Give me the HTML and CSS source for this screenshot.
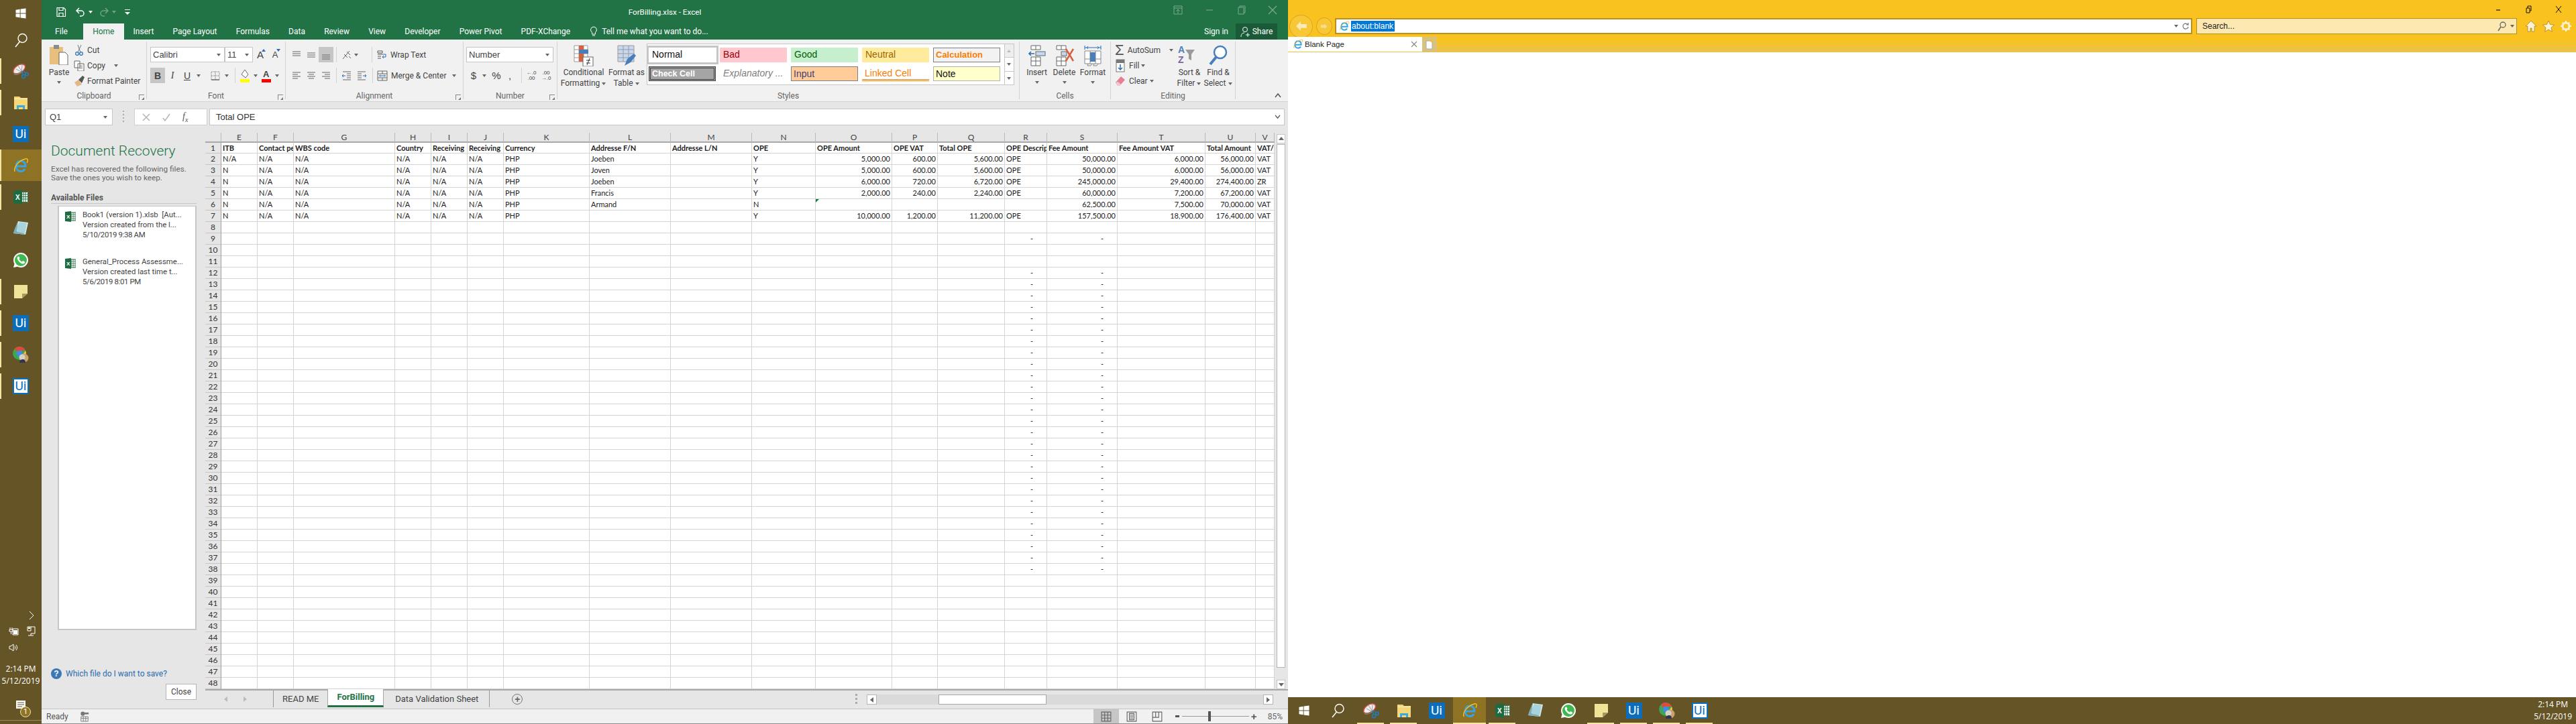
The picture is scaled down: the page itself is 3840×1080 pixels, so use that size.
FILE: index.html
```html
<!DOCTYPE html>
<html lang="en">
<head>
<meta charset="utf-8">
<title>ForBilling.xlsx - Excel</title>
<link rel="stylesheet" href="styles.css">
</head>
<body>
<svg class="defs" width="0" height="0" aria-hidden="true">
  <symbol id="i-win" viewBox="0 0 24 24"><path d="M3 5.6 10.4 4.5V11.5H3ZM11.5 4.3 21 3V11.5H11.5ZM3 12.5H10.4V19.5L3 18.4ZM11.5 12.5H21V21L11.5 19.7Z" fill="#fff"/></symbol>
  <symbol id="i-search" viewBox="0 0 24 24"><circle cx="14.5" cy="9" r="6.5" fill="none" stroke="#fff" stroke-width="1.4"/><path d="M10.5 14 4 22" stroke="#fff" stroke-width="1.6"/></symbol>
  <symbol id="i-snip" viewBox="0 0 24 24"><path d="M1 14C0 8 8 1 15 2c5 1 4 5 1 9-4 4-10 7-13 6z" fill="#eee" stroke="#d8504c" stroke-width="1.4"/><path d="M1 14c3 2 8 1 11-1l1 2c-3 2-6 3-10 3z" fill="#94745f"/><path d="M8 4l7 11M14 3 13 15M5 9l9 5" stroke="#8a8a8a" stroke-width=".8"/><circle cx="16" cy="20" r="2.6" fill="none" stroke="#1c7fc4" stroke-width="1.5"/><circle cx="21" cy="16.5" r="2.2" fill="none" stroke="#1c7fc4" stroke-width="1.5"/><path d="M13 12l3 6M15 12l5 3" stroke="#1c7fc4" stroke-width="1.2"/></symbol>
  <symbol id="i-folder" viewBox="0 0 24 24"><path d="M2 3h8l2 2h10v17H2z" fill="#f5d778"/><path d="M2 6h20v1H2z" fill="#fff3c4"/><path d="M6 22v-6h12v6h-3v-3H9v3z" fill="#38a9e2"/></symbol>
  <symbol id="i-ie" viewBox="0 0 24 24"><path d="M6 13h13c0-5-3-8-7-8s-7 3.500-7 8 3 7.500 7 7.500c3 0 5-1 6-3.500" fill="none" stroke="#35a4e8" stroke-width="3"/><path d="M3 21C1 15 8 5 19 2c4-1 4 2 2 6" fill="none" stroke="#f3c11c" stroke-width="1.400"/></symbol>
  <symbol id="i-xl" viewBox="0 0 24 24"><rect x="12" y="4" width="11" height="16" fill="#fff"/><path d="M12.500 4.500h10v15h-10M16 4.500v15M19 4.500v15M13 8h10M13 11.500h10M13 15h10" fill="none" stroke="#1e6b41" stroke-width=".9"/><path d="M1 3 14 1V23L1 21Z" fill="#1e6b41"/><text x="4" y="15.500" class="svg-x">X</text></symbol>
  <symbol id="i-note" viewBox="0 0 24 24"><path d="M8 1 23 3 19 21 1 19Z" fill="#d8eaee"/><path d="M8 1 3 12 1 19 19 21 14 17 6 16Z" fill="#7fb0ba"/><path d="M7 9 10 2 21 4 18 19 7 17Z" fill="#a9d3dc"/></symbol>
  <symbol id="i-wa" viewBox="0 0 24 24"><path d="M12 1a11 11 0 0 1 0 22c-2 0-4-.500-5-1.200L1 23l1.500-5.500A11 11 0 0 1 12 1z" fill="#fff"/><circle cx="12" cy="12" r="9" fill="#3fb94f"/><path d="M8 6.500c-1.500 1-2 3 0 6s5 5.500 8 5c2-.500 2.500-2 2-3l-3-1.500-1.200 1.500c-2-.800-3.300-2.200-4.300-4l1-1.500L9.200 6.500z" fill="#fff"/></symbol>
  <symbol id="i-sticky" viewBox="0 0 24 24"><path d="M2 2H22V15L14 22H2Z" fill="#f0e398"/><path d="M14 22V15H22Z" fill="#a39a62"/></symbol>
  <symbol id="i-chrome" viewBox="0 0 24 24"><circle cx="10" cy="10" r="10" fill="#3aa757"/><path d="M10 0a10 10 0 0 1 9 6H10a4 4 0 0 0-4 2L3 3a10 10 0 0 1 7-3z" fill="#de4b3e"/><path d="M19 6a10 10 0 0 1-8 14l4-8z" fill="#f7c531"/><circle cx="10" cy="10" r="4" fill="#4688f1"/><circle cx="17" cy="17" r="6.500" fill="#c9a26c"/><circle cx="14" cy="16" r="4.500" fill="#d7d2c8"/><path d="M10 24c0-4 3-5 5-5s4 1 4 5z" fill="#2f3550"/></symbol>
  <symbol id="i-xlsm" viewBox="0 0 16 16"><rect x="8" y="2" width="8" height="12" fill="#fff" stroke="#1e6b41"/><path d="M10 2v12M13 2v12M8 5h8M8 8h8M8 11h8" stroke="#1e6b41" stroke-width=".7"/><path d="M0 1 9 0V16L0 15Z" fill="#1e6b41"/><text x="2" y="11" class="svg-x small">X</text></symbol>
  <symbol id="l-top" viewBox="0 0 16 16"><path d="M2 3h12M2 6h12M2 9h12" stroke="#666" fill="none"/></symbol>
  <symbol id="l-mid" viewBox="0 0 16 16"><path d="M2 5h12M2 8h12M2 11h12" stroke="#666" fill="none"/></symbol>
  <symbol id="l-bot" viewBox="0 0 16 16"><path d="M2 8h12M2 11h12M2 14h12" stroke="#666" fill="none"/></symbol>
  <symbol id="l-left" viewBox="0 0 16 16"><path d="M2 3h12M2 6h8M2 9h12M2 12h8" stroke="#666" fill="none"/></symbol>
  <symbol id="l-center" viewBox="0 0 16 16"><path d="M2 3h12M4 6h8M2 9h12M4 12h8" stroke="#666" fill="none"/></symbol>
  <symbol id="l-right" viewBox="0 0 16 16"><path d="M2 3h12M6 6h8M2 9h12M6 12h8" stroke="#666" fill="none"/></symbol>
</svg>

<div class="desk">
  <aside class="vbar">
    <div class="vstart"><svg class="i20"><use href="#i-win"/></svg></div>
    <div class="vstart"><svg class="i24"><use href="#i-search"/></svg></div>
    <div class="vitems">
      <div class="vitem on"><svg class="i24"><use href="#i-snip"/></svg></div>
      <div class="vitem on"><svg class="i24"><use href="#i-folder"/></svg></div>
      <div class="vitem"><span class="ui">Ui</span></div>
      <div class="vitem on active"><svg class="i24"><use href="#i-ie"/></svg></div>
      <div class="vitem on"><svg class="i24"><use href="#i-xl"/></svg></div>
      <div class="vitem"><svg class="i24"><use href="#i-note"/></svg></div>
      <div class="vitem"><svg class="i24"><use href="#i-wa"/></svg></div>
      <div class="vitem on"><svg class="i24"><use href="#i-sticky"/></svg></div>
      <div class="vitem on"><span class="ui">Ui</span></div>
      <div class="vitem on"><svg class="i24"><use href="#i-chrome"/></svg></div>
      <div class="vitem on"><span class="ui alt">Ui</span></div>
    </div>
    <div class="vtray">
      <div class="tray-row end"><svg class="tray" viewBox="0 0 16 16"><path d="M6 2l6 6-6 6" fill="none" stroke="#fff"/></svg></div>
      <div class="tray-row">
        <svg class="tray" viewBox="0 0 16 16"><path d="M3 2v3M6 2v3M2 5h5v3H2zM4.500 8v4M7 4h8v9H7z" fill="none" stroke="#fff"/><rect x="8" y="6" width="6" height="6" fill="#fff"/></svg>
        <svg class="tray" viewBox="0 0 16 16"><path d="M3 1h11v10H8M3 1v6h5V1M8 11v3M4 14h8" fill="none" stroke="#fff"/><rect x="4" y="2" width="3" height="2" fill="#fff"/></svg>
      </div>
      <div class="tray-row"><svg class="tray" viewBox="0 0 16 16"><path d="M2 6h2l4-3v10l-4-3H2zM10 5.500c1 1.500 1 3.500 0 5M12 4c2 2.500 2 5.500 0 8" fill="none" stroke="#fff"/></svg></div>
      <div class="vclock"><span>2:14 PM</span><span>5/12/2019</span></div>
      <div class="vnotify">
        <svg class="tray" viewBox="0 0 16 16"><path d="M1 0h14v12H1z" fill="#fff"/><path d="M3 3h10M3 6h10M3 9h7" stroke="#655426"/></svg>
        <span class="badge">1</span>
      </div>
    </div>
  </aside>

  <main class="excel">
    <header class="xl-title">
      <div class="qat">
        <span class="b"><svg class="i16" viewBox="0 0 16 16"><path d="M2 1.500h10l2.500 2.500v10.500h-12.500zM5 1.500v4h6v-4M5 14.500v-5h6v5" fill="none" stroke="#fff" stroke-width="1.200"/></svg></span>
        <span class="b gap7"><svg class="i16" viewBox="0 0 16 16"><path d="M6 2 2 6l4 4M2 6h7a4 4 0 0 1 0 8H7" fill="none" stroke="#fff" stroke-width="1.500"/></svg></span><span class="ar white"></span>
        <span class="b gap5"><svg class="i16" viewBox="0 0 16 16"><path d="M10 2l4 4-4 4M14 6H7a4 4 0 0 0 0 8h2" fill="none" stroke="#6fa287" stroke-width="1.500"/></svg></span><span class="ar dim"></span>
        <span class="qat-more"></span>
      </div>
      <div class="xl-name">ForBilling.xlsx - Excel</div>
      <div class="winbtns">
        <svg class="i16" viewBox="0 0 16 16"><path d="M2 2h12v12H2zM2 5h12M8 13V7M5.500 9.500 8 7l2.500 2.500" fill="none" stroke="#7fa893"/></svg>
        <svg class="i16" viewBox="0 0 16 16"><path d="M3 8h10" stroke="#7fa893"/></svg>
        <svg class="i16" viewBox="0 0 16 16"><path d="M4 4h8v10H4zM6 4V2h8v10h-2" fill="none" stroke="#7fa893"/></svg>
        <svg class="i16" viewBox="0 0 16 16"><path d="M2 2l12 12M14 2 2 14" stroke="#7fa893" stroke-width="1.200"/></svg>
      </div>
    </header>

    <nav class="xl-tabs">
      <span class="tab file">File</span>
      <span class="tab cur">Home</span>
      <span class="tab">Insert</span>
      <span class="tab">Page Layout</span>
      <span class="tab">Formulas</span>
      <span class="tab">Data</span>
      <span class="tab">Review</span>
      <span class="tab">View</span>
      <span class="tab">Developer</span>
      <span class="tab">Power Pivot</span>
      <span class="tab">PDF-XChange</span>
      <span class="tell"><svg class="i16" viewBox="0 0 16 16"><path d="M8 1a4.500 4.500 0 0 0-2.500 8.200V12h5V9.200A4.500 4.500 0 0 0 8 1zM6 14h4" fill="none" stroke="#fff"/></svg>Tell me what you want to do...</span>
      <span class="signin">Sign in</span>
      <span class="share"><svg class="i16" viewBox="0 0 16 16"><circle cx="7" cy="5" r="3.500" fill="none" stroke="#fff"/><path d="M1 16c0-4 2-6 5-6M11 10v6M8 13h6" fill="none" stroke="#fff"/></svg>Share</span>
    </nav>

    <section class="ribbon">
      <div class="grp w-clip">
        <div class="body clip">
          <div class="paste">
            <svg class="paste-ic" viewBox="0 0 28 30"><rect x="0" y="3" width="20" height="26" fill="#e8bf7c"/><rect x="6" y="0" width="8" height="6" fill="#8b8b8b"/><path d="M14 11h9l4 4v15H14z" fill="#fff" stroke="#666"/></svg>
            <span class="big-t">Paste</span>
            <span class="ar"></span>
          </div>
          <div class="clip-list">
            <div class="clip-row"><svg class="i16" viewBox="0 0 16 16"><path d="M6 0l4 11M11 0 6 11" stroke="#777" fill="none"/><circle cx="5" cy="13" r="2.300" fill="none" stroke="#2b6cb0" stroke-width="1.200"/><circle cx="11" cy="13" r="2.300" fill="none" stroke="#2b6cb0" stroke-width="1.200"/></svg><span>Cut</span></div>
            <div class="clip-row"><svg class="i16" viewBox="0 0 16 16"><path d="M1 1h8v10H1zM6 5h9v11H6z" fill="#fff" stroke="#666"/><path d="M8 8h5M8 10h5M8 12h5" stroke="#888"/></svg><span>Copy</span><span class="ar copy-ar"></span></div>
            <div class="clip-row"><svg class="i16" viewBox="0 0 16 16"><path d="M1 10l6-4 5 7-7 3z" fill="#e3b887"/><path d="M7 6l6-6 3 2-4 9z" fill="#555"/></svg><span>Format Painter</span></div>
          </div>
        </div>
        <div class="lbl">Clipboard</div><span class="launch"></span>
      </div>

      <div class="grp w-font">
        <div class="body stack">
          <div class="rrow">
            <span class="combo w111">Calibri<span class="ar"></span></span>
            <span class="combo w42">11<span class="ar"></span></span>
            <span class="b fs">A<em class="up"></em></span>
            <span class="b fs sm">A<em class="dn"></em></span>
          </div>
          <div class="rrow">
            <span class="b sel txt bold">B</span>
            <span class="b txt ital">I</span>
            <span class="b txt und">U</span><span class="ar w12"></span>
            <span class="b gap8"><svg class="i16" viewBox="0 0 16 16"><path d="M2 2h12v12H2zM8 2v12M2 8h12" fill="none" stroke="#666" stroke-dasharray="1 1"/><path d="M2 14h12" stroke="#444"/></svg></span><span class="ar w12"></span>
            <span class="sep m6"></span>
            <span class="b"><svg class="i16 h20" viewBox="0 0 16 20"><path d="M8 1l5 7-4 5-6-5z" fill="#fff" stroke="#666"/><rect x="1" y="15" width="14" height="5" fill="#ffff00"/></svg></span><span class="ar w10"></span>
            <span class="b"><svg class="i16 h20" viewBox="0 0 16 20"><text x="3" y="12" class="svg-a">A</text><rect x="1" y="15" width="14" height="5" fill="#ff0000"/></svg></span><span class="ar w10"></span>
          </div>
        </div>
        <div class="lbl">Font</div><span class="launch"></span>
      </div>

      <div class="grp w-align">
        <div class="body stack">
          <div class="rrow">
            <span class="b"><svg class="i16"><use href="#l-top"/></svg></span>
            <span class="b"><svg class="i16"><use href="#l-mid"/></svg></span>
            <span class="b sel"><svg class="i16"><use href="#l-bot"/></svg></span>
            <span class="sep m4"></span>
            <span class="b"><svg class="i16" viewBox="0 0 16 16"><path d="M2 14 12 2M4 7l5 5M8 3l5 5" fill="none" stroke="#666"/><path d="M11 10l3 3" stroke="#2b6cb0"/></svg></span><span class="ar w8"></span>
            <span class="sep ml18"></span>
            <span class="b"><svg class="i16" viewBox="0 0 16 16"><path d="M2 2h7v3H2zM2 7h7M2 10h5M2 13h5" fill="none" stroke="#555"/><path d="M9 7h5v4H9M11 9l-2 2 2 2" fill="none" stroke="#2b6cb0"/></svg></span>
            <span class="rtext">Wrap Text</span>
          </div>
          <div class="rrow">
            <span class="b"><svg class="i16"><use href="#l-left"/></svg></span>
            <span class="b"><svg class="i16"><use href="#l-center"/></svg></span>
            <span class="b"><svg class="i16"><use href="#l-right"/></svg></span>
            <span class="sep m4"></span>
            <span class="b"><svg class="i16" viewBox="0 0 16 16"><path d="M2 2h12M8 5h6M8 8h6M8 11h6M2 14h12" stroke="#666"/><path d="M6 8H1M3 6 1 8l2 2" fill="none" stroke="#2b6cb0"/></svg></span>
            <span class="b"><svg class="i16" viewBox="0 0 16 16"><path d="M2 2h12M2 5h6M2 8h6M2 11h6M2 14h12" stroke="#666"/><path d="M10 8h5M13 6l2 2-2 2" fill="none" stroke="#2b6cb0"/></svg></span>
            <span class="sep ml4"></span>
            <span class="b"><svg class="i16" viewBox="0 0 16 16"><path d="M1 1h14v14H1zM1 5h14M1 11h14M8 1v4M8 11v4" fill="none" stroke="#666"/><path d="M4 8h8M5 6.500 3.500 8 5 9.500M11 6.500 12.500 8 11 9.500" fill="none" stroke="#2b6cb0"/></svg></span>
            <span class="rtext">Merge &amp; Center</span><span class="ar merge-ar"></span>
          </div>
        </div>
        <div class="lbl">Alignment</div><span class="launch"></span>
      </div>

      <div class="grp w-num">
        <div class="body stack num">
          <div class="rrow"><span class="combo w130">Number<span class="ar"></span></span></div>
          <div class="rrow">
            <span class="b txt big">$</span><span class="ar w10"></span>
            <span class="b txt big mla">%</span>
            <span class="b txt big nar">,</span>
            <span class="sep m8"></span>
            <span class="b dec"><em>←.0</em><em>.00</em></span>
            <span class="b dec"><em>.00</em><em>→.0</em></span>
          </div>
        </div>
        <div class="lbl">Number</div><span class="launch"></span>
      </div>

      <div class="grp w-styles">
        <div class="body styles">
          <div class="bigb w62">
            <svg class="big-ic" viewBox="0 0 30 32"><path d="M1 1h20v24H1zM1 7h20M1 13h20M1 19h20M8 1v24M15 1v24" fill="#fff" stroke="#9a9a9a"/><rect x="8" y="1" width="7" height="6" fill="#d8603c"/><rect x="8" y="7" width="7" height="6" fill="#d8603c"/><rect x="8" y="7" width="14" height="6" fill="#4a7ebb"/><rect x="8" y="13" width="7" height="12" fill="#d8603c"/><rect x="14" y="18" width="15" height="14" fill="#fff" stroke="#666"/><path d="M19 23h6M19 27h6M24 20l-4 10" stroke="#333"/></svg>
            <span class="big-t">Conditional</span>
            <span class="big-t">Formatting<span class="ar inl"></span></span>
          </div>
          <div class="bigb w60">
            <svg class="big-ic" viewBox="0 0 30 32"><rect x="2" y="1" width="24" height="24" fill="#c6d9f1"/><path d="M2 1h24v24H2zM2 7h24M2 13h24M2 19h24M10 1v24M18 1v24" fill="none" stroke="#9a9a9a"/><path d="M12 31l4-10 10-8 3 3-8 10z" fill="#4a7ebb"/></svg>
            <span class="big-t">Format as</span>
            <span class="big-t">Table<span class="ar inl"></span></span>
          </div>
          <div class="gallery">
            <div class="gal-grid">
              <span class="st s-normal">Normal</span>
              <span class="st s-bad">Bad</span>
              <span class="st s-good">Good</span>
              <span class="st s-neutral">Neutral</span>
              <span class="st s-calc">Calculation</span>
              <span class="st s-check">Check Cell</span>
              <span class="st s-expl">Explanatory ...</span>
              <span class="st s-input">Input</span>
              <span class="st s-linked">Linked Cell</span>
              <span class="st s-note">Note</span>
            </div>
            <div class="gal-scroll">
              <span class="gs dim-up"></span>
              <span class="gs dn"></span>
              <span class="gs more"></span>
            </div>
          </div>
        </div>
        <div class="lbl">Styles</div>
      </div>

      <div class="grp w-cells">
        <div class="body cells">
          <div class="bigb w41">
            <svg class="big-ic" viewBox="0 0 30 32"><path d="M6 1h14v6H6zM13 1v6M6 18h14v13H6zM6 24h14M13 18v13" fill="#fff" stroke="#666"/><rect x="13" y="10" width="14" height="6" fill="#c6d9f1" stroke="#666"/><path d="M11 13H3M6 10l-3 3 3 3" fill="none" stroke="#2b6cb0" stroke-width="1.500"/></svg>
            <span class="big-t">Insert</span><span class="ar blk"></span>
          </div>
          <div class="bigb w41">
            <svg class="big-ic" viewBox="0 0 30 32"><path d="M3 1h14v6H3zM10 1v6M3 18h14v13H3zM3 24h14M10 18v13" fill="#fff" stroke="#666"/><rect x="10" y="10" width="8" height="6" fill="#c6d9f1" stroke="#666"/><path d="M17 6l11 18M28 6 17 24" stroke="#d8603c" stroke-width="2.500"/></svg>
            <span class="big-t">Delete</span><span class="ar blk"></span>
          </div>
          <div class="bigb w44">
            <svg class="big-ic" viewBox="0 0 30 32"><path d="M3 4h24M3 1v6M27 1v6M6 4l2-2M6 4l2 2M24 4l-2-2M24 4l-2 2" fill="none" stroke="#2b6cb0"/><path d="M3 9h24v19H3zM11 9v19M19 9v19M3 21h24" fill="#fff" stroke="#888"/><rect x="11" y="11" width="8" height="14" fill="#4a7ebb"/><path d="M8 28l-1 3h5l2-3M17 28l-1 3h5l2-3" fill="none" stroke="#888"/></svg>
            <span class="big-t">Format</span><span class="ar blk"></span>
          </div>
        </div>
        <div class="lbl">Cells</div>
      </div>

      <div class="grp w-edit">
        <div class="body edit">
          <div class="edit-list">
            <div class="edit-row"><span class="sigma">Σ</span><span>AutoSum</span><span class="ar auto-ar"></span></div>
            <div class="edit-row"><svg class="i16 h20" viewBox="0 0 16 20"><rect x="2" y="1" width="12" height="18" fill="#fff" stroke="#777"/><rect x="2" y="1" width="12" height="5" fill="#777"/><path d="M8 8v8M5 13l3 3 3-3" fill="none" stroke="#2b6cb0" stroke-width="1.500"/></svg><span>Fill<span class="ar inl"></span></span></div>
            <div class="edit-row"><svg class="i16" viewBox="0 0 16 16"><path d="M1 10 9 1l6 5-8 9H4z" fill="#e57f96"/><path d="M1 10l4-1 4 4-2 2H4z" fill="#f3c4cf"/></svg><span>Clear<span class="ar inl"></span></span></div>
          </div>
          <div class="bigb w46">
            <span class="sort-ic"><span class="az"><em class="a">A</em><em class="z">Z</em></span><svg class="funnel" viewBox="0 0 14 18"><path d="M0 1h14L9 8v9L5 15V8z" fill="#9a9a9a"/></svg></span>
            <span class="big-t">Sort &amp;</span>
            <span class="big-t">Filter<span class="ar inl"></span></span>
          </div>
          <div class="bigb w40">
            <svg class="big-ic" viewBox="0 0 30 32"><circle cx="18" cy="11" r="9" fill="#fff" stroke="#4a7ebb" stroke-width="2.500"/><path d="M12 18 3 29" stroke="#4a7ebb" stroke-width="4"/></svg>
            <span class="big-t">Find &amp;</span>
            <span class="big-t">Select<span class="ar inl"></span></span>
          </div>
        </div>
        <div class="lbl">Editing</div>
      </div>
      <svg class="collapse" viewBox="0 0 10 8"><path d="M1 7l4-5 4 5" fill="none" stroke="#555" stroke-width="1.500"/></svg>
    </section>

    <section class="fbar">
      <div class="namebox">Q1<span class="ar"></span></div>
      <span class="fdots"></span>
      <div class="fbtns">
        <svg class="i12" viewBox="0 0 12 12"><path d="M1 1l10 10M11 1 1 11" stroke="#b5b5b5" stroke-width="1.500"/></svg>
        <svg class="i12" viewBox="0 0 12 12"><path d="M1 7l3 4 7-10" fill="none" stroke="#b5b5b5" stroke-width="1.500"/></svg>
        <span class="fx">f<sub>x</sub></span>
      </div>
      <div class="finput"><span>Total OPE</span><svg class="fexp" viewBox="0 0 10 8"><path d="M1 1l4 5 4-5" fill="none" stroke="#555" stroke-width="1.500"/></svg></div>
    </section>

    <div class="work">
      <aside class="recovery">
        <h1 class="rec-title">Document Recovery</h1>
        <p class="rec-desc">Excel has recovered the following files.<br>Save the ones you wish to keep.</p>
        <h2 class="rec-avail">Available Files</h2>
        <div class="rec-list">
          <div class="rec-item">
            <svg class="i16"><use href="#i-xlsm"/></svg>
            <div class="rec-lines"><span>Book1 (version 1).xlsb&nbsp; [Aut...</span><span>Version created from the l...</span><span>5/10/2019 9:38 AM</span></div>
          </div>
          <div class="rec-item">
            <svg class="i16"><use href="#i-xlsm"/></svg>
            <div class="rec-lines"><span>General_Process Assessme...</span><span>Version created last time t...</span><span>5/6/2019 8:01 PM</span></div>
          </div>
        </div>
        <div class="rec-help"><span class="qm">?</span><span>Which file do I want to save?</span></div>
        <div class="rec-foot"><span class="closebtn">Close</span></div>
      </aside>

      <div class="sheet">
        <div class="sheet-main">
          <div class="grid">
            <div class="row colhead">
              <div class="corner"></div>
              <div>E</div><div>F</div><div>G</div><div>H</div><div>I</div><div>J</div><div>K</div><div>L</div><div>M</div><div>N</div><div>O</div><div>P</div><div>Q</div><div>R</div><div>S</div><div>T</div><div>U</div><div>V</div>
            </div>
            <div class="row first hd">
              <div class="rh">1</div>
              <div>ITB</div><div>Contact pe</div><div>WBS code</div><div>Country</div><div>Receiving</div><div>Receiving</div><div>Currency</div><div>Addresse F/N</div><div>Addresse L/N</div><div>OPE</div><div>OPE Amount</div><div>OPE VAT</div><div>Total OPE</div><div>OPE Descrip</div><div>Fee Amount</div><div>Fee Amount VAT</div><div>Total Amount</div><div>VAT/</div>
            </div>
            <div class="row">
              <div class="rh">2</div>
              <div>N/A</div><div>N/A</div><div>N/A</div><div>N/A</div><div>N/A</div><div>N/A</div><div>PHP</div><div>Joeben</div><div></div><div>Y</div><div class="n">5,000.00</div><div class="n">600.00</div><div class="n">5,600.00</div><div>OPE</div><div class="n">50,000.00</div><div class="n">6,000.00</div><div class="n">56,000.00</div><div>VAT</div>
            </div>
            <div class="row">
              <div class="rh">3</div>
              <div>N</div><div>N/A</div><div>N/A</div><div>N/A</div><div>N/A</div><div>N/A</div><div>PHP</div><div>Joven</div><div></div><div>Y</div><div class="n">5,000.00</div><div class="n">600.00</div><div class="n">5,600.00</div><div>OPE</div><div class="n">50,000.00</div><div class="n">6,000.00</div><div class="n">56,000.00</div><div>VAT</div>
            </div>
            <div class="row">
              <div class="rh">4</div>
              <div>N</div><div>N/A</div><div>N/A</div><div>N/A</div><div>N/A</div><div>N/A</div><div>PHP</div><div>Joeben</div><div></div><div>Y</div><div class="n">6,000.00</div><div class="n">720.00</div><div class="n">6,720.00</div><div>OPE</div><div class="n">245,000.00</div><div class="n">29,400.00</div><div class="n">274,400.00</div><div>ZR</div>
            </div>
            <div class="row">
              <div class="rh">5</div>
              <div>N</div><div>N/A</div><div>N/A</div><div>N/A</div><div>N/A</div><div>N/A</div><div>PHP</div><div>Francis</div><div></div><div>Y</div><div class="n">2,000.00</div><div class="n">240.00</div><div class="n">2,240.00</div><div>OPE</div><div class="n">60,000.00</div><div class="n">7,200.00</div><div class="n">67,200.00</div><div>VAT</div>
            </div>
            <div class="row">
              <div class="rh">6</div>
              <div>N</div><div>N/A</div><div>N/A</div><div>N/A</div><div>N/A</div><div>N/A</div><div>PHP</div><div>Armand</div><div></div><div>N</div><div class="tri"></div><div></div><div></div><div></div><div class="n">62,500.00</div><div class="n">7,500.00</div><div class="n">70,000.00</div><div>VAT</div>
            </div>
            <div class="row">
              <div class="rh">7</div>
              <div>N</div><div>N/A</div><div>N/A</div><div>N/A</div><div>N/A</div><div>N/A</div><div>PHP</div><div></div><div></div><div>Y</div><div class="n">10,000.00</div><div class="n">1,200.00</div><div class="n">11,200.00</div><div>OPE</div><div class="n">157,500.00</div><div class="n">18,900.00</div><div class="n">176,400.00</div><div>VAT</div>
            </div>
            <div class="blank">
              <div class="rhcol">
                <span>8</span><span>9</span><span>10</span><span>11</span><span>12</span><span>13</span><span>14</span><span>15</span><span>16</span><span>17</span><span>18</span><span>19</span><span>20</span><span>21</span><span>22</span><span>23</span><span>24</span><span>25</span><span>26</span><span>27</span><span>28</span><span>29</span><span>30</span><span>31</span><span>32</span><span>33</span><span>34</span><span>35</span><span>36</span><span>37</span><span>38</span><span>39</span><span>40</span><span>41</span><span>42</span><span>43</span><span>44</span><span>45</span><span>46</span><span>47</span><span>48</span>
              </div>
              <div></div><div></div><div></div><div></div><div></div><div></div><div></div><div></div><div></div><div></div><div></div><div></div><div></div>
              <div class="dashes">
                <b></b><b>-</b><b></b><b></b><b>-</b><b>-</b><b>-</b><b>-</b><b>-</b><b>-</b><b>-</b><b>-</b><b>-</b><b>-</b><b>-</b><b>-</b><b>-</b><b>-</b><b>-</b><b>-</b><b>-</b><b>-</b><b>-</b><b>-</b><b>-</b><b>-</b><b>-</b><b>-</b><b>-</b><b>-</b><b>-</b>
              </div>
              <div class="dashes">
                <b></b><b>-</b><b></b><b></b><b>-</b><b>-</b><b>-</b><b>-</b><b>-</b><b>-</b><b>-</b><b>-</b><b>-</b><b>-</b><b>-</b><b>-</b><b>-</b><b>-</b><b>-</b><b>-</b><b>-</b><b>-</b><b>-</b><b>-</b><b>-</b><b>-</b><b>-</b><b>-</b><b>-</b><b>-</b><b>-</b>
              </div>
              <div></div><div></div><div></div>
            </div>
          </div>
          <div class="vscroll">
            <span class="vs-btn"><i class="tri-up"></i></span>
            <span class="vs-thumb"></span>
            <span class="vs-btn"><i class="tri-dn"></i></span>
          </div>
        </div>
        <div class="tabbar">
          <div class="sheet-nav"><i class="tri-l"></i><i class="tri-r"></i></div>
          <div class="sheet-tabs">
            <span class="stab">READ ME</span>
            <span class="stab cur">ForBilling</span>
            <span class="stab last">Data Validation Sheet</span>
          </div>
          <span class="addsheet">+</span>
          <span class="vdots"></span>
          <div class="hscroll">
            <span class="hs-btn"><i class="tri-l dark"></i></span>
            <div class="hs-track"><span class="hs-thumb"></span></div>
            <span class="hs-btn"><i class="tri-r dark"></i></span>
          </div>
        </div>
      </div>
    </div>

    <footer class="status">
      <span class="ready">Ready</span>
      <svg class="macro" viewBox="0 0 16 18"><circle cx="5" cy="4" r="3.500" fill="#777"/><rect x="7" y="2" width="8" height="3" fill="#777"/><path d="M2 9h12v8H2zM2 12h12M6 9v8M10 9v8" fill="none" stroke="#777"/></svg>
      <div class="views">
        <span class="view cur"><svg class="i16" viewBox="0 0 14 14"><path d="M1 1h12v12H1zM5 1v12M9 1v12M1 5h12M1 9h12" fill="none" stroke="#666"/></svg></span>
        <span class="view"><svg class="i16" viewBox="0 0 14 14"><path d="M1 1h12v12H1zM4 3h6v8H4zM5 5h4M5 7h4M5 9h4" fill="none" stroke="#666"/></svg></span>
        <span class="view"><svg class="i16" viewBox="0 0 14 14"><path d="M1 1h12v12H1zM1 8h8V1M5 1v7" fill="none" stroke="#666"/></svg></span>
      </div>
      <div class="zoom">
        <span class="z-minus"></span>
        <div class="z-track"><span class="z-thumb"></span></div>
        <span class="z-plus">+</span>
      </div>
      <span class="zpct">85%</span>
    </footer>
  </main>

  <section class="ie">
    <header class="ie-chrome">
      <div class="ie-win">
        <svg class="i12" viewBox="0 0 12 12"><path d="M3 7h6" stroke="#111" stroke-width="1.200"/></svg>
        <svg class="i12" viewBox="0 0 12 12"><path d="M3 4h5v7H3zM5 4V1h5v7H8" fill="none" stroke="#111"/></svg>
        <svg class="i12" viewBox="0 0 12 12"><path d="M2 1l8 10M10 1 2 11" stroke="#111"/></svg>
      </div>
      <div class="ie-nav">
        <span class="circ back"><svg viewBox="0 0 20 20"><path d="M9 3 2 10l7 7v-4h9V7H9z" fill="#fbe9b8"/></svg></span>
        <span class="circ fwd"><svg viewBox="0 0 20 20"><path d="M11 4l6 6-6 6v-3H3V7h8z" fill="#f7dd92"/></svg></span>
        <div class="addr">
          <svg class="i16"><use href="#i-ie"/></svg>
          <span class="url">about:blank</span>
          <span class="addr-r"><span class="ar"></span><svg class="i12" viewBox="0 0 12 12"><path d="M9.500 4A4 4 0 1 0 10 7M10 1v3H7" fill="none" stroke="#777" stroke-width="1.200"/></svg></span>
        </div>
        <div class="ie-search">
          <span>Search...</span>
          <span class="addr-r"><svg class="i16" viewBox="0 0 16 16"><circle cx="10" cy="6" r="4" fill="none" stroke="#666" stroke-width="1.300"/><path d="M7 9l-4 6" stroke="#666" stroke-width="1.500"/></svg><span class="ar"></span></span>
        </div>
        <div class="ie-tools">
          <svg class="i20" viewBox="0 0 20 20"><path d="M10 2 2 10h3v8h4v-5h2v5h4v-8h3z" fill="#fff3cf" stroke="#8a6d1c" stroke-width=".6"/></svg>
          <svg class="i20" viewBox="0 0 20 20"><path d="M10 2l2.500 5.500 6 .7-4.500 4 1.300 6L10 15l-5.300 3.200 1.300-6-4.500-4 6-.7z" fill="#fff3cf" stroke="#8a6d1c" stroke-width=".6"/></svg>
          <svg class="i20" viewBox="0 0 20 20"><circle cx="10" cy="10" r="5" fill="none" stroke="#fff3cf" stroke-width="3"/><path d="M10 2v3M10 15v3M2 10h3M15 10h3M4.500 4.500l2 2M13.500 13.500l2 2M4.500 15.500l2-2M13.500 6.500l2-2" stroke="#fff3cf" stroke-width="2"/></svg>
        </div>
      </div>
      <div class="ie-tabs">
        <div class="ie-tab"><svg class="i16"><use href="#i-ie"/></svg><span>Blank Page</span><svg class="ie-x" viewBox="0 0 10 10"><path d="M1 1l8 8M9 1 1 9" stroke="#888" stroke-width="1.200"/></svg></div>
        <div class="ie-new"><svg class="i16" viewBox="0 0 16 16"><path d="M3 3h9v12H3z" fill="#fff" stroke="#aaa"/><path d="M11 0l1 2 2 1-2 1-1 2-1-2-2-1 2-1z" fill="#f3c11c"/></svg></div>
      </div>
    </header>
    <div class="ie-page"></div>
    <footer class="htask">
      <div class="ht w48"><svg class="i20"><use href="#i-win"/></svg></div>
      <div class="ht w51"><svg class="i24"><use href="#i-search"/></svg></div>
      <div class="ht on"><svg class="i24"><use href="#i-snip"/></svg></div>
      <div class="ht on"><svg class="i24"><use href="#i-folder"/></svg></div>
      <div class="ht"><span class="ui">Ui</span></div>
      <div class="ht on active"><svg class="i24"><use href="#i-ie"/></svg></div>
      <div class="ht on"><svg class="i24"><use href="#i-xl"/></svg></div>
      <div class="ht"><svg class="i24"><use href="#i-note"/></svg></div>
      <div class="ht"><svg class="i24"><use href="#i-wa"/></svg></div>
      <div class="ht on"><svg class="i24"><use href="#i-sticky"/></svg></div>
      <div class="ht on"><span class="ui">Ui</span></div>
      <div class="ht on"><svg class="i24"><use href="#i-chrome"/></svg></div>
      <div class="ht on"><span class="ui alt">Ui</span></div>
      <div class="hclock"><span>2:14 PM</span><span>5/12/2019</span></div>
    </footer>
  </section>
</div>
</body>
</html>
```
FILE: styles.css
```css
* { box-sizing: border-box; }
html, body { margin: 0; padding: 0; }
body { width: 3840px; height: 1080px; overflow: hidden; background: #fff; font: 12px Roboto, "Liberation Sans", sans-serif; color: #444; }
.defs { display: none; }
em, i { font-style: normal; }
.svg-x { font: bold 10px "Liberation Sans", sans-serif; fill: #fff; }
.svg-x.small { font-size: 8px; }
.svg-a { font: bold 13px "Liberation Sans", sans-serif; fill: #444; }

.desk { display: grid; grid-template-columns: 62px 1858px 1920px; height: 1080px; }

.i12 { width: 12px; height: 12px; display: block; }
.i16 { width: 16px; height: 16px; display: block; flex: none; }
.h20 { height: 20px; }
.i20 { width: 20px; height: 20px; display: block; }
.i24 { width: 24px; height: 24px; display: block; }
.ui { width: 24px; height: 24px; background: #0a6ebd; color: #fff; font: 19px/24px Roboto, sans-serif; text-align: center; display: block; }
.ui.alt { background: #fff; border: 2px solid #0a6ebd; color: #0a6ebd; line-height: 20px; }

/* left task bar */
.vbar { background: #655426; display: flex; flex-direction: column; height: 1080px; color: #fff; }
.vstart { height: 40px; display: flex; align-items: center; justify-content: center; }
.vitems { margin-top: 2px; }
.vitem { height: 47px; display: flex; align-items: center; justify-content: center; position: relative; }
.vitem.on::before { content: ""; position: absolute; left: 0; top: 5px; bottom: 4px; width: 2px; background: #f7e4a0; }
.vitem.active { background: #8f7324; }
.vitem.active::before { top: 0; bottom: 0; }
.vtray { margin-top: auto; margin-bottom: 5px; border-bottom: 1px solid #978a63; padding-bottom: 5px; }
.tray-row { height: 24px; display: flex; align-items: center; justify-content: space-between; padding: 0 8px 0 12px; }
.tray-row.end { justify-content: flex-end; }
.tray { width: 16px; height: 16px; display: block; }
.vclock { display: flex; flex-direction: column; align-items: center; margin-top: 11px; line-height: 18px; font: 12px/18px "Open Sans", sans-serif; color: #fff; }
.vnotify { position: relative; display: flex; justify-content: center; margin-top: 20px; height: 24px; }
.badge { position: absolute; left: 30px; top: 9px; width: 16px; height: 16px; border-radius: 50%; background: #8f7324; border: 1px solid #f7e4a0; color: #fff; font: 11px/14px Roboto, sans-serif; text-align: center; }

/* excel */
.excel { display: flex; flex-direction: column; height: 1080px; background: #f1f1f1; min-width: 0; }
.xl-title { height: 35px; background: #217346; display: grid; grid-template-columns: 1fr auto 1fr; align-items: center; color: #fff; }
.qat { display: flex; align-items: center; padding-left: 18px; }
.b { width: 22px; height: 23px; display: flex; align-items: center; justify-content: center; flex: none; }
.gap7 { margin-left: 7px; } .gap5 { margin-left: 5px; } .gap8 { margin-left: 8px; }
.ar { display: inline-block; width: 8px; height: 0; flex: none; position: relative; }
.ar::after { content: ""; position: absolute; left: 1px; top: -2px; border: 3px solid transparent; border-top: 4px solid #666; border-bottom: 0; }
.ar.white::after { border-top-color: #fff; }
.ar.dim::after { border-top-color: #6fa287; }
.ar.w12 { width: 12px; } .ar.w12::after { left: 3px; }
.ar.w10 { width: 10px; } .ar.w10::after { left: 2px; }
.ar.inl { margin-left: 2px; vertical-align: middle; }
.qat-more { width: 8px; height: 8px; margin-left: 12px; border-top: 1px solid #fff; position: relative; }
.qat-more::after { content: ""; position: absolute; left: 0; top: 3px; border: 4px solid transparent; border-top: 4px solid #fff; border-bottom: 0; }
.xl-name { color: #fff; font-size: 11.7px; }
.winbtns { display: flex; justify-content: flex-end; gap: 31px; padding-right: 15px; margin-top: -5px; }

.xl-tabs { height: 24px; background: #217346; display: flex; align-items: stretch; color: #fff; padding-left: 6px; }
.tab { padding: 0 14.1px; line-height: 24px; font-size: 12px; }
.tab.file { margin-right: 9px; }
.tab.cur { background: #f1f1f1; color: #217346; }
.tell { display: flex; align-items: center; margin-left: 13px; gap: 4px; }
.signin { margin-left: auto; line-height: 24px; padding-right: 11px; }
.share { width: 62px; background: #1b5a38; margin-right: 16px; display: flex; align-items: center; justify-content: center; gap: 2px; }

.ribbon { height: 93px; background: #f1f1f1; border-bottom: 1px solid #d4d4d4; display: flex; align-items: flex-start; position: relative; }
.grp { height: 86px; margin-top: 3px; border-right: 1px solid #d2d2d2; display: flex; flex-direction: column; position: relative; flex: none; }
.w-clip { width: 157px; } .w-font { width: 207px; } .w-align { width: 265px; } .w-num { width: 140px; }
.w-styles { width: 689px; } .w-cells { width: 136px; } .w-edit { width: 186px; }
.body { height: 73px; display: flex; flex: none; }
.lbl { text-align: center; color: #666; line-height: 16px; flex: none; }
.launch { position: absolute; right: 3px; bottom: -1px; width: 8px; height: 8px; border-left: 1px solid #888; border-top: 1px solid #888; }
.launch::after { content: ""; position: absolute; right: 0; bottom: 0; border: 2px solid #777; border-top-color: transparent; border-left-color: transparent; }
.stack { flex-direction: column; padding: 8px 0 0 5px; gap: 8px; }
.stack.num { padding-left: 4px; }
.rrow { display: flex; align-items: center; height: 23px; }
.big-t { display: block; line-height: 16px; white-space: nowrap; color: #444; text-align: center; }

.clip { padding-left: 11px; }
.paste { width: 30px; display: flex; flex-direction: column; align-items: center; padding-top: 5px; }
.paste-ic { width: 28px; height: 30px; display: block; }
.paste .big-t { margin-top: 3px; }
.paste .ar { margin-top: 7px; }
.clip-list { padding-top: 1px; margin-left: 7px; }
.clip-row { height: 23px; display: flex; align-items: center; gap: 4px; white-space: nowrap; }
.clip-row .i16 { margin-left: 0; }
.copy-ar { margin-left: 8px; }

.combo { height: 23px; background: #fff; border: 1px solid #c6c6c6; padding-left: 3px; font: 13px/21px "Liberation Sans", sans-serif; color: #444; display: flex; align-items: center; justify-content: space-between; padding-right: 4px; flex: none; }
.w111 { width: 111px; } .w42 { width: 42px; margin-left: 0; } .w130 { width: 130px; }
.fs { font: 15px "Liberation Sans", sans-serif; position: relative; margin-left: 0; }
.fs.sm { font-size: 13px; }
.fs em { position: absolute; right: 3px; top: 3px; border: 3px solid transparent; }
.fs em.up { border-bottom: 4px solid #2b6cb0; border-top: 0; }
.fs em.dn { border-top: 4px solid #2b6cb0; border-bottom: 0; }
.txt { font: 14px "Liberation Serif", serif; color: #444; }
.bold { font-weight: bold; font-family: "Liberation Sans", sans-serif; }
.ital { font-style: italic; }
.und { text-decoration: underline; font-family: "Liberation Sans", sans-serif; }
.big { font: 15px "Liberation Sans", sans-serif; }
.sel { background: #c6c6c6; }
.sep { width: 1px; height: 23px; background: #d2d2d2; flex: none; }
.m6 { margin: 0 3px 0 6px; }
.m4 { margin: 0 4px; }
.ml18 { margin: 0 3px 0 18px; }
.ml4 { margin: 0 3px 0 5px; }
.m8 { margin: 0 3px 0 8px; }
.ar.w8::after { left: 0; }
.rtext { margin-left: 2px; white-space: nowrap; color: #444; }
.merge-ar { margin-left: 8px; }
.mla { margin-left: 2px; }
.nar { width: 18px; }
.dec { flex-direction: column; font: 8px/8px "Liberation Sans", sans-serif; color: #444; }

.styles { padding: 5px 0 0 8px; }
.bigb { display: flex; flex-direction: column; align-items: center; flex: none; }
.big-ic { width: 30px; height: 32px; display: block; margin-bottom: 1px; }
.w62 { width: 62px; margin-right: 3px; } .w60 { width: 60px; }
.gallery { width: 548px; height: 62px; margin-top: -2px; background: #fff; border: 1px solid #c6c6c6; display: flex; justify-content: space-between; }
.gal-grid { display: grid; grid-template-columns: repeat(5, 100px); grid-auto-rows: 22px; column-gap: 6px; row-gap: 6px; padding: 5px 0 0 2px; }
.st { font: 14px/20px "Liberation Sans", sans-serif; padding-left: 5px; white-space: nowrap; overflow: hidden; }
.s-normal { color: #111; outline: 3px solid #c6c6c6; border: 0; margin: 0 -1px 0 0; }
.s-bad { background: #ffc7ce; color: #9c0006; }
.s-good { background: #c6efce; color: #006100; }
.s-neutral { background: #ffeb9c; color: #9c6500; }
.s-calc { background: #f2f2f2; color: #fa7d00; border: 1px solid #7f7f7f; font-weight: bold; font-size: 13px; padding-left: 3px; }
.s-check { background: #a5a5a5; color: #fff; border: 3px double #3f3f3f; font-weight: bold; font-size: 12.5px; line-height: 16px; padding-left: 2px; }
.s-expl { color: #7f7f7f; font-style: italic; }
.s-input { background: #ffcc99; color: #3f3f76; border: 1px solid #7f7f7f; padding-left: 3px; }
.s-linked { color: #fa7d00; border-bottom: 3px double #ff8001; padding-left: 4px; }
.s-note { background: #ffffcc; color: #111; border: 1px solid #b2b2b2; padding-left: 3px; }
.gal-scroll { width: 14px; display: flex; flex-direction: column; border-left: 1px solid #c6c6c6; }
.gs { flex: 1; position: relative; border-bottom: 1px solid #c6c6c6; }
.gs.dim-up { background: #eee; }
.gs::after { content: ""; position: absolute; left: 3px; top: 8px; border: 3px solid transparent; }
.gs.dim-up::after { border-bottom: 4px solid #bbb; border-top: 0; }
.gs.dn::after, .gs.more::after { border-top: 4px solid #666; border-bottom: 0; }
.gs.more { border-bottom: 0; }

.cells { padding: 5px 0 0 5px; }
.w41 { width: 41px; } .w44 { width: 44px; } .w46 { width: 46px; } .w40 { width: 40px; }
.ar.blk { margin-top: 7px; }

.edit { padding: 5px 0 0 6px; }
.edit-list { width: 88px; margin-top: -4px; }
.edit-row { height: 23px; display: flex; align-items: center; gap: 5px; white-space: nowrap; }
.sigma { width: 16px; font: 22px/22px "Liberation Sans", sans-serif; color: #555; text-align: center; }
.auto-ar { margin-left: 7px; }
.sort-ic { width: 34px; height: 32px; margin-bottom: 1px; display: flex; }
.az { display: flex; flex-direction: column; font: bold 14px/15px "Liberation Sans", sans-serif; }
.a { color: #4a7ebb; } .z { color: #8064a2; }
.funnel { width: 14px; height: 18px; display: block; margin: 6px 0 0 1px; }
.collapse { width: 10px; height: 8px; align-self: flex-end; margin: 0 0 5px 58px; }

/* formula bar */
.fbar { height: 46px; background: #e6e6e6; display: flex; padding: 10px 5px 0 5px; align-items: flex-start; flex: none; }
.namebox { width: 101px; height: 25px; background: #fff; border: 1px solid #c6c6c6; font: 13px/23px "Liberation Sans", sans-serif; color: #444; padding: 0 6px; display: flex; align-items: center; justify-content: space-between; }
.fdots { width: 2px; height: 18px; margin: 3px 15px 0 15px; background: repeating-linear-gradient(#aaa 0 2px, transparent 2px 5px); }
.fbtns { width: 109px; height: 25px; background: #fff; border: 1px solid #d0d0d0; display: flex; align-items: center; padding-left: 11px; gap: 18px; }
.fx { font: italic 14px "Liberation Serif", serif; color: #555; }
.fx sub { font-size: 10px; }
.finput { margin-left: 3px; width: 1603px; height: 25px; background: #fff; border: 1px solid #c6c6c6; display: flex; align-items: center; justify-content: space-between; padding: 0 5px 0 9px; font: 13px "Liberation Sans", sans-serif; color: #333; }
.fexp { width: 9px; height: 7px; }

/* work area */
.work { flex: 1; display: flex; min-height: 0; background: #e6e6e6; }
.recovery { width: 244px; padding: 12px 13px 0 14px; display: flex; flex-direction: column; flex: none; }
.rec-title { margin: 0; font: 300 21px/30px Roboto, sans-serif; color: #217346; white-space: nowrap; }
.rec-desc { margin: 6px 0 0; font-size: 11.75px; line-height: 13px; color: #666; white-space: nowrap; }
.rec-avail { margin: 16px 0 0; height: 16px; font: bold 12px/14px Roboto, sans-serif; color: #555; border-bottom: 1px solid #c6c6c6; }
.rec-list { margin: 3px 0 0 10px; width: 207px; height: 633px; background: #fff; border: 2px solid #c6c6c6; border-top-width: 1px; padding: 5px 0 0 9px; }
.rec-item { display: flex; gap: 10px; margin-bottom: 25px; }
.rec-item .i16 { margin-top: 2px; }
.rec-lines { display: flex; flex-direction: column; font-size: 11.4px; line-height: 15px; color: #444; white-space: nowrap; }
.rec-lines span:last-child { letter-spacing: -.35px; }
.rec-help { margin: 55px 0 0 0; display: flex; align-items: center; gap: 6px; color: #2b6cb0; white-space: nowrap; height: 20px; padding-left: 0; }
.qm { width: 16px; height: 16px; border-radius: 50%; background: #3c78b8; color: #fff; text-align: center; font: bold 12px/16px "Liberation Sans", sans-serif; }
.rec-foot { display: flex; justify-content: flex-end; margin-top: 5px; }
.closebtn { width: 46px; height: 24px; background: #fff; border: 1px solid #b5b5b5; text-align: center; line-height: 22px; color: #444; }

.sheet { flex: 1; display: flex; flex-direction: column; min-width: 0; }
.sheet-main { display: flex; height: 830px; }
.grid { width: 1594px; background: #fff; --cols: 24px 54px 54px 151px 54px 54px 54px 128px 121px 121px 95px 114px 68px 100px 63px 105px 131px 75px 28px; }
.row { display: grid; grid-template-columns: var(--cols); height: 17px; font: 11px/16px Lato, "Liberation Sans", sans-serif; color: #222; }
.row > div { border-right: 1px solid #d4d4d4; border-bottom: 1px solid #d4d4d4; padding: 0 2px; overflow: hidden; white-space: nowrap; }
.row.first { height: 16px; }
.row.hd > div { font-weight: bold; }
.row > .n { text-align: right; }
.row > .rh { background: #e6e6e6; font-weight: normal !important; font-size: 12px; text-align: center; color: #333; border-bottom-color: #c6c6c6; border-right-color: #9f9f9f; }
.colhead { height: 15px; background: #e6e6e6; font-size: 12px; line-height: 14px; color: #444; }
.row.colhead > div { border-right-color: #b9b9b9; border-bottom: 2px solid #a8a8a8; text-align: center; }
.tri { position: relative; }
.tri::before { content: ""; position: absolute; left: 0; top: 0; border-top: 5px solid #107c41; border-right: 5px solid transparent; }

.blank { display: grid; grid-template-columns: var(--cols); height: 697px; background: repeating-linear-gradient(#fff 0 16px, #d4d4d4 16px 17px); }
.blank > div { border-right: 1px solid #d4d4d4; }
.rhcol { background: #e6e6e6; display: flex; flex-direction: column; border-right-color: #9f9f9f !important; }
.rhcol span { height: 17px; font: 12px/16px Lato, sans-serif; color: #333; text-align: center; border-bottom: 1px solid #c6c6c6; }
.dashes { display: flex; flex-direction: column; }
.dashes b { display: block; height: 17px; text-align: right; padding-right: 20px; font: 11px/16px Lato, sans-serif; color: #222; }

.vscroll { width: 16px; padding: 2px 0 0 3px; display: flex; flex-direction: column; }
.vs-btn { width: 13px; height: 14px; background: #fff; border: 1px solid #c6c6c6; display: flex; align-items: center; justify-content: center; }
.vs-thumb { width: 13px; height: 782px; background: #fff; border: 1px solid #b5b5b5; margin: 1px 0 18px; }
.tri-up { border: 4px solid transparent; border-bottom: 5px solid #666; border-top: 0; }
.tri-dn { border: 4px solid transparent; border-top: 5px solid #666; border-bottom: 0; }
.tri-l { display: block; border: 4px solid transparent; border-right: 5px solid #bbb; border-left: 0; }
.tri-r { display: block; border: 4px solid transparent; border-left: 5px solid #bbb; border-right: 0; }
.tri-l.dark { border-right-color: #666; }
.tri-r.dark { border-left-color: #666; }

.tabbar { height: 29px; border-top: 2px solid #a8a8a8; display: flex; align-items: flex-start; background: #e6e6e6; }
.sheet-nav { width: 101px; height: 25px; display: flex; align-items: center; gap: 24px; padding-left: 28px; flex: none; }
.sheet-tabs { display: flex; height: 25px; border-left: 1px solid #999; border-right: 1px solid #999; }
.stab { padding: 0 13px 0 13px; line-height: 25px; font-size: 13px; color: #444; white-space: nowrap; }
.stab.last { padding: 0 16px 0 17px; }
.stab.cur { background: #fff; color: #217346; font-weight: bold; border-left: 1px solid #a8a8a8; border-right: 1px solid #a8a8a8; border-bottom: 3px solid #217346; padding: 0 13px; line-height: 23px; margin-top: -2px; height: 27px; }
.addsheet { width: 16px; height: 16px; margin: 5px 0 0 33px; border-radius: 50%; border: 1px solid #777; color: #666; font: bold 14px/14px "Liberation Sans", sans-serif; text-align: center; flex: none; }
.vdots { width: 3px; height: 15px; margin: 5px 14px 0 auto; background: repeating-linear-gradient(#aaa 0 3px, transparent 3px 6px); }
.hscroll { width: 606px; margin: 6px 22px 0 0; display: flex; height: 15px; background: #dadada; flex: none; }
.hs-btn { width: 15px; height: 15px; background: #fff; border: 1px solid #b5b5b5; display: flex; align-items: center; justify-content: center; flex: none; }
.hs-track { flex: 1; padding-left: 92px; }
.hs-thumb { display: block; width: 161px; height: 15px; background: #fff; border: 1px solid #a8a8a8; }

.status { height: 23px; background: #f1f1f1; border-top: 1px solid #c6c6c6; border-bottom: 1px solid #8c8c8c; display: flex; align-items: center; padding-left: 7px; flex: none; color: #555; }
.ready { width: 50px; }
.macro { width: 14px; height: 16px; }
.views { display: flex; margin-left: auto; height: 21px; }
.view { width: 38px; display: flex; align-items: center; justify-content: center; }
.view.cur { background: #c6c6c6; }
.zoom { display: flex; align-items: center; margin-left: 4px; width: 126px; }
.z-minus { width: 6px; height: 3px; background: #555; margin-left: 4px; }
.z-track { width: 100px; height: 1px; background: #999; margin-left: 4px; position: relative; }
.z-thumb { position: absolute; left: 39px; top: -7px; width: 4px; height: 15px; background: #555; }
.z-plus { font: bold 15px/15px "Liberation Sans", sans-serif; color: #555; margin-left: 3px; }
.zpct { margin: 0 8px 0 16px; color: #666; }

/* internet explorer */
.ie { display: flex; flex-direction: column; height: 1080px; font: 12px "Liberation Sans", sans-serif; color: #222; }
.ie-chrome { height: 78px; flex: none; background: linear-gradient(#f9c21f 0, #f9c21f 59px, #e9c24d 78px); }
.ie-win { height: 27px; display: flex; justify-content: flex-end; align-items: center; gap: 33px; padding-right: 20px; }
.ie-nav { height: 24px; display: flex; align-items: center; position: relative; }
.circ { border-radius: 50%; display: flex; align-items: center; justify-content: center; border: 1px solid #dca41d; background: #f8c735; flex: none; }
.circ svg { width: 60%; height: 60%; display: block; }
.back { width: 35px; height: 35px; margin: 0 5px 0 2px; }
.fwd { width: 24px; height: 26px; margin-right: 4px; }
.addr { width: 1278px; height: 24px; background: #fff; border: 2px solid #b8901f; display: flex; align-items: center; padding-left: 4px; gap: 2px; }
.url { background: #0078d7; color: #fff; padding: 0 1px; height: 16px; line-height: 16px; width: 65px; font-size: 12px; white-space: nowrap; overflow: hidden; }
.addr-r { margin-left: auto; display: flex; align-items: center; gap: 4px; padding-right: 2px; }
.ie-search { width: 478px; height: 24px; margin-left: 6px; background: #fce8b0; border: 1px solid #b8901f; display: flex; align-items: center; padding-left: 8px; }
.ie-tools { display: flex; gap: 6px; margin-left: 11px; }
.ie-tabs { display: flex; height: 22px; margin-top: 4px; }
.ie-tab { width: 200px; height: 22px; background: #fff; display: flex; align-items: center; padding-left: 7px; gap: 2px; position: relative; font-size: 11.5px; }
.ie-x { width: 10px; height: 10px; margin-left: auto; margin-right: 7px; }
.ie-new { width: 22px; background: #d9c27d; display: flex; align-items: center; justify-content: center; }
.ie-page { flex: 1; background: #fff; }
.htask { height: 40px; background: #655426; display: flex; align-items: center; flex: none; color: #fff; }
.ht { width: 49px; height: 40px; display: flex; align-items: center; justify-content: center; position: relative; flex: none; }
.ht.w48 { width: 48px; } .ht.w51 { width: 51px; }
.ht.on::after { content: ""; position: absolute; left: 4px; right: 5px; bottom: 0; height: 2px; background: #f7e4a0; }
.ht.active { background: #8f7324; }
.ht.active::after { left: 0; right: 0; }
.hclock { margin-left: auto; display: flex; flex-direction: column; align-items: center; padding-right: 6px; font: 12px/18px "Open Sans", sans-serif; color: #fff; }
```
